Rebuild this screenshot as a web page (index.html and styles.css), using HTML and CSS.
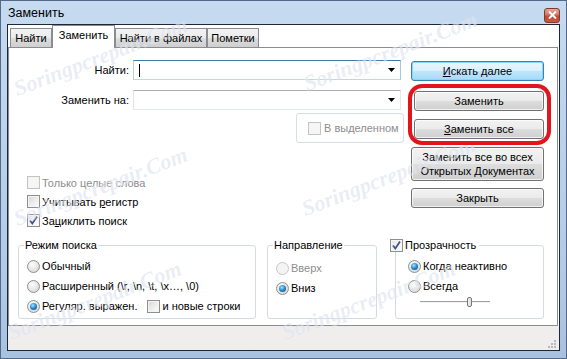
FILE: index.html
```html
<!DOCTYPE html>
<html lang="ru">
<head>
    <meta charset="UTF-8">
    <title>Заменить</title>
    <link rel="stylesheet" href="styles.css">
</head>
<body>
    <div class="window">
        <div class="titlebar">
            <span class="title">Заменить</span>
            <span class="close">
                <svg width="9" height="8" viewBox="0 0 9 8"><path d="M1 0.5 L8 7.5 M8 0.5 L1 7.5" stroke="#fff" stroke-width="2"/></svg>
            </span>
        </div>
        <div class="client">
            <div class="tabs">
                <div class="tab tab-find">Найти</div>
                <div class="tab tab-replace active">Заменить</div>
                <div class="tab tab-files">Найти в файлах</div>
                <div class="tab tab-marks">Пометки</div>
            </div>
            <div class="panel">
                <div class="top">
                    <div class="left">
                        <div class="field">
                            <span class="field-label">Найти:</span>
                            <div class="combo focused">
                                <span class="caret"></span>
                                <svg class="arrow" width="7" height="4" viewBox="0 0 7 4"><path d="M0 0 H7 L3.5 4 Z" fill="#000"/></svg>
                            </div>
                        </div>
                        <div class="field">
                            <span class="field-label">Заменить на:</span>
                            <div class="combo">
                                <svg class="arrow" width="7" height="4" viewBox="0 0 7 4"><path d="M0 0 H7 L3.5 4 Z" fill="#000"/></svg>
                            </div>
                        </div>
                        <div class="selection">
                            <span class="check disabled"></span>
                            <span>В выделенном</span>
                        </div>
                        <div class="options">
                            <div class="opt disabled-text"><span class="check disabled"></span><span>Только целые слова</span></div>
                            <div class="opt"><span class="check"></span><span>Учитывать <u>р</u>егистр</span></div>
                            <div class="opt"><span class="check on"><svg width="11" height="11" viewBox="0 0 11 11"><path d="M2 5.5 L4.3 8.5 L9 1.5" stroke="#3d4f8c" stroke-width="1.7" fill="none"/></svg></span><span>За<u>ц</u>иклить поиск</span></div>
                        </div>
                    </div>
                    <div class="right">
                        <div class="btn btn-default"><span><u>И</u>скать далее</span></div>
                        <div class="btn btn-replace">Заменить</div>
                        <div class="btn btn-replace-all"><span><u>З</u>аменить все</span></div>
                        <div class="btn btn-all-docs"><span>Заменить все во всех</span><span>Открытых <u>Д</u>окументах</span></div>
                        <div class="btn btn-close">Закрыть</div>
                    </div>
                </div>
                <div class="groups">
                    <fieldset class="group group-mode">
                        <legend class="group-title">Режим поиска</legend>
                        <div class="opt-row"><span class="radio"></span><span>Обычный</span></div>
                        <div class="opt-row"><span class="radio"></span><span>Расширенный (\r, \n, \t, \x…, \0)</span></div>
                        <div class="opt-row"><span class="radio on"></span><span>Регуляр. выражен.</span><span class="check newlines"></span><span>и новые строки</span></div>
                    </fieldset>
                    <fieldset class="group group-dir">
                        <legend class="group-title">Направление</legend>
                        <div class="opt-row disabled-text"><span class="radio disabled"></span><span>Вверх</span></div>
                        <div class="opt-row"><span class="radio on"></span><span>Вниз</span></div>
                    </fieldset>
                    <fieldset class="group group-alpha">
                        <legend class="group-title legend-check"><span class="check on"><svg width="11" height="11" viewBox="0 0 11 11"><path d="M2 5.5 L4.3 8.5 L9 1.5" stroke="#3d4f8c" stroke-width="1.7" fill="none"/></svg></span><span>Прозрачность</span></legend>
                        <div class="opt-row"><span class="radio on"></span><span>Когда неактивно</span></div>
                        <div class="opt-row"><span class="radio"></span><span>Всегда</span></div>
                        <div class="slider">
                            <div class="slider-track"></div>
                            <div class="slider-thumb"></div>
                        </div>
                    </fieldset>
                </div>
            </div>
            <div class="status">
                <svg class="grip" width="8" height="8" viewBox="0 0 8 8">
                    <rect x="6" y="0" width="2" height="2" fill="#b8b8b8"/>
                    <rect x="3" y="3" width="2" height="2" fill="#b8b8b8"/>
                    <rect x="6" y="3" width="2" height="2" fill="#b8b8b8"/>
                    <rect x="0" y="6" width="2" height="2" fill="#b8b8b8"/>
                    <rect x="3" y="6" width="2" height="2" fill="#b8b8b8"/>
                    <rect x="6" y="6" width="2" height="2" fill="#b8b8b8"/>
                </svg>
            </div>
        </div>

        <!-- watermark and the red mark drawn over the dialog -->
        <span class="wm wm-1">Soringpcrepair.Com</span>
        <span class="wm wm-2">Soringpcrepair.Com</span>
        <span class="wm wm-3">Soringpcrepair.Com</span>
        <span class="wm wm-4">Soringpcrepair.Com</span>
        <span class="wm wm-5">Soringpcrepair.Com</span>
        <span class="wm wm-6">Soringpcrepair.Com</span>
        <div class="callout"></div>
    </div>
</body>
</html>
```

FILE: styles.css
```css
* {
    box-sizing: border-box;
}
body {
    margin: 0;
    font-family: "Liberation Sans", Arial, sans-serif;
    font-size: 11px;
    color: #000;
    background: #fff;
}
.window {
    position: relative;
    width: 567px;
    height: 359px;
    display: flex;
    flex-direction: column;
    padding: 0 6px 7px 6px;
    border: 1px solid #54688a;
    background: linear-gradient(180deg, #c6dbf0 0%, #bed4ec 30%, #b0c9e6 80%, #a7c1e0 100%);
    overflow: hidden;
    white-space: nowrap;
}
.titlebar {
    height: 23px;
    display: flex;
    align-items: center;
    justify-content: space-between;
    padding-left: 1px;
}
.title {
    font-size: 12.5px;
}
.close {
    width: 16px;
    height: 15px;
    margin-top: 5px;
    border: 1px solid #7a3b30;
    border-radius: 3px;
    background: linear-gradient(180deg, #e8a696 0%, #d27563 45%, #c0472f 55%, #c75a3f 100%);
    display: flex;
    align-items: center;
    justify-content: center;
}
.client {
    flex: 1;
    border: 1px solid #1e2735;
    background: #fff;
    display: flex;
    flex-direction: column;
}
.tabs {
    height: 22px;
    display: flex;
    align-items: flex-end;
    padding-left: 2px;
}
.tab {
    height: 19px;
    border: 1px solid #898c95;
    border-bottom: none;
    background: linear-gradient(180deg, #f2f2f2 0%, #ebebeb 50%, #dddddd 51%, #cfcfcf 100%);
    text-align: center;
    line-height: 19px;
}
.tab-find {
    width: 42px;
}
.tab-replace {
    width: 63px;
}
.tab-files {
    width: 92px;
}
.tab-marks {
    width: 52px;
}
.tab.active {
    position: relative;
    z-index: 1;
    height: 23px;
    margin-bottom: -1px;
    background: #fff;
    line-height: 19px;
}
.panel {
    height: 279px;
    margin-right: 1px;
    border: 1px solid #898c95;
    background: #fff;
    display: flex;
    flex-direction: column;
}
.top {
    display: flex;
    padding-top: 12px;
}
.left {
    width: 396px;
}
.field {
    display: flex;
    align-items: center;
    height: 20px;
}
.field + .field {
    margin-top: 10px;
}
.field-label {
    width: 124px;
    padding-right: 4px;
    text-align: right;
}
.combo {
    position: relative;
    width: 268px;
    height: 20px;
    border: 1px solid;
    border-color: #abadb3 #e3e9ef #e3e9ef #e2e3ea;
    display: flex;
    align-items: center;
    justify-content: flex-end;
    padding-right: 5px;
}
.combo.focused {
    border-color: #3d7bad #a4c9e3 #b7d9ed #b5cfe7;
}
.caret {
    position: absolute;
    left: 5px;
    top: 3px;
    width: 1px;
    height: 13px;
    background: #000;
}
.selection {
    margin: 3px 0 0 287px;
    width: 108px;
    height: 30px;
    border: 1px solid #d5dfe5;
    border-radius: 3px;
    display: flex;
    align-items: center;
    gap: 3px;
    padding-left: 11px;
    color: #8d8d8d;
}
.options {
    margin-top: 30px;
    padding-left: 18px;
}
.opt {
    height: 19px;
    display: flex;
    align-items: center;
    gap: 2px;
}
.disabled-text {
    color: #8d8d8d;
}
.check {
    position: relative;
    flex: none;
    width: 13px;
    height: 13px;
    border: 1px solid #8e8f8f;
    background: linear-gradient(135deg, #d6d6d6 0%, #f0f0f0 60%, #fdfdfd 100%);
    box-shadow: inset 0 0 0 1px #f4f4f4;
    display: flex;
    align-items: center;
    justify-content: center;
}
.check.disabled {
    border-color: #c4c4c4;
    background: #f6f6f6;
}
.check.on {
    background: linear-gradient(135deg, #e4e4e4 0%, #f6f6f6 60%, #fff 100%);
}
.right {
    width: 133px;
    margin-left: 6px;
    padding-top: 1px;
    display: flex;
    flex-direction: column;
}
.btn {
    height: 20px;
    border: 1px solid #707070;
    border-radius: 3px;
    background: linear-gradient(180deg, #f2f2f2 0%, #ebebeb 50%, #dddddd 51%, #cfcfcf 100%);
    box-shadow: inset 0 0 0 1px rgba(255, 255, 255, 0.7);
    display: flex;
    flex-direction: column;
    align-items: center;
    justify-content: center;
}
.btn-default {
    border-color: #3c7fb1;
    background: linear-gradient(180deg, #eaf6fd 0%, #d9f0fc 50%, #bee6fd 51%, #a7d9f5 100%);
    box-shadow: inset 0 0 0 1px #7fdcf8;
}
.btn-replace {
    margin: 10px 0 0 3px;
}
.btn-replace-all {
    margin: 8px 0 0 3px;
}
.btn-all-docs {
    height: 34px;
    margin-top: 8px;
    line-height: 14px;
}
.btn-close {
    margin-top: 7px;
}
.groups {
    display: flex;
    margin-top: 8px;
    padding-left: 9px;
}
.group {
    margin: 0;
    min-width: 0;
    height: 81px;
    padding: 4px 0 0 8px;
    border: 1px solid #d3dbe2;
    border-radius: 3px;
}
.group-title {
    padding: 0 1px;
    margin-left: -3px;
    line-height: 14px;
}
.group-mode {
    width: 238px;
}
.group-dir {
    width: 110px;
    margin-left: 11px;
    padding-top: 6px;
}
.group-alpha {
    width: 149px;
    margin-left: 18px;
    padding-left: 12px;
}
.legend-check {
    display: flex;
    align-items: center;
    gap: 2px;
    margin-left: -19px;
    padding-right: 3px;
}
.opt-row {
    height: 20px;
    display: flex;
    align-items: center;
    gap: 2px;
}
.radio {
    flex: none;
    width: 13px;
    height: 13px;
    border: 1px solid #8e8f8f;
    border-radius: 50%;
    background: radial-gradient(circle at 40% 35%, #ffffff 0%, #eeeeee 35%, #cdcdcd 100%);
    display: flex;
    align-items: center;
    justify-content: center;
}
.radio.on::after {
    content: "";
    width: 7px;
    height: 7px;
    border-radius: 50%;
    background: radial-gradient(circle at 40% 35%, #a8e4ff 0%, #2d8ed6 45%, #0b3d78 100%);
}
.radio.disabled {
    border-color: #c6c6c6;
    background: #f4f4f4;
}
.newlines {
    margin-left: 8px;
}
.slider {
    position: relative;
    width: 70px;
    height: 12px;
    margin-left: 12px;
}
.slider-track {
    position: absolute;
    left: 0;
    right: 0;
    top: 5px;
    height: 2px;
    border-top: 1px solid #a0a0a0;
    border-bottom: 1px solid #f4f4f4;
}
.slider-thumb {
    position: absolute;
    left: 47px;
    top: 1px;
    width: 5px;
    height: 10px;
    border: 1px solid #777;
    border-radius: 2px;
    background: linear-gradient(90deg, #f4f4f4, #dcdcdc);
}
.status {
    position: relative;
    flex: 1;
    background: #f0eeed;
}
.grip {
    position: absolute;
    right: 3px;
    bottom: 2px;
}
.wm {
    position: absolute;
    z-index: 2;
    font-family: "Liberation Serif", serif;
    font-size: 22px;
    font-weight: bold;
    font-style: italic;
    line-height: 24px;
    color: rgba(160, 175, 210, 0.24);
    text-shadow: 0 0 1px rgba(255, 255, 255, 0.6);
    transform: rotate(-21deg);
    transform-origin: 0 100%;
    pointer-events: none;
}
.wm-1 {
    left: 18px;
    top: 76px;
}
.wm-2 {
    left: 308px;
    top: 71px;
}
.wm-3 {
    left: 18px;
    top: 206px;
}
.wm-4 {
    left: 306px;
    top: 196px;
}
.wm-5 {
    left: 12px;
    top: 320px;
}
.wm-6 {
    left: 286px;
    top: 320px;
}
.callout {
    position: absolute;
    z-index: 3;
    left: 407px;
    top: 83px;
    width: 143px;
    height: 61px;
    border: 4px solid #e3141c;
    border-radius: 14px;
}
```
